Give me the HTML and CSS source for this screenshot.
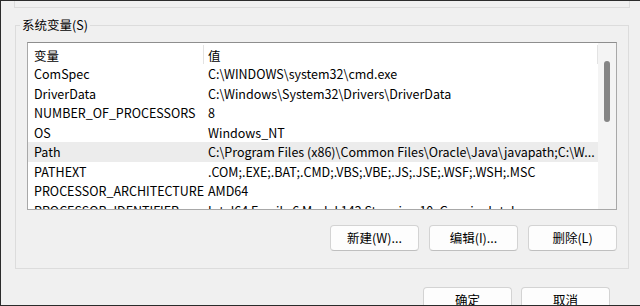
FILE: index.html
```html
<!DOCTYPE html>
<html lang="zh-CN">
<head>
<meta charset="utf-8">
<title>环境变量</title>
<link rel="stylesheet" href="styles.css">
</head>
<body>
<div class="window">
  <div class="prev-group"></div>
  <fieldset class="group">
    <legend class="group-title">系统变量(S)</legend>
    <div class="group-body">
      <div class="listbox">
        <div class="list-main">
          <div class="list-header">
            <div class="col-name hcell">变量</div>
            <div class="col-value hcell">值</div>
          </div>
          <div class="list-body">
            <div class="row"><div class="col-name">ComSpec</div><div class="col-value">C:\WINDOWS\system32\cmd.exe</div></div>
            <div class="row"><div class="col-name">DriverData</div><div class="col-value">C:\Windows\System32\Drivers\DriverData</div></div>
            <div class="row"><div class="col-name">NUMBER_OF_PROCESSORS</div><div class="col-value">8</div></div>
            <div class="row"><div class="col-name">OS</div><div class="col-value">Windows_NT</div></div>
            <div class="row selected"><div class="col-name">Path</div><div class="col-value">C:\Program Files (x86)\Common Files\Oracle\Java\javapath;C:\W...</div></div>
            <div class="row"><div class="col-name">PATHEXT</div><div class="col-value">.COM;.EXE;.BAT;.CMD;.VBS;.VBE;.JS;.JSE;.WSF;.WSH;.MSC</div></div>
            <div class="row"><div class="col-name">PROCESSOR_ARCHITECTURE</div><div class="col-value">AMD64</div></div>
            <div class="row"><div class="col-name">PROCESSOR_IDENTIFIER</div><div class="col-value">Intel64 Family 6 Model 142 Stepping 10, GenuineIntel</div></div>
          </div>
        </div>
        <div class="scrollbar"><div class="thumb"></div></div>
      </div>
      <div class="button-row">
        <button class="btn">新建(W)...</button>
        <button class="btn">编辑(I)...</button>
        <button class="btn">删除(L)</button>
      </div>
    </div>
  </fieldset>
  <div class="dialog-buttons">
    <button class="btn">确定</button>
    <button class="btn">取消</button>
  </div>
</div>
</body>
</html>
```

FILE: styles.css
```css
* { box-sizing: border-box; }
html, body { margin: 0; padding: 0; background: #f0f0f0; }
body {
  width: 640px;
  height: 306px;
  overflow: hidden;
  font-family: "Noto Sans CJK SC", "Noto Sans", sans-serif;
  font-size: 12.5px;
  color: #000;
}
.window {
  width: 640px;
  height: 306px;
  border-top: 1px solid #2b2b2b;
  border-left: 1px solid #2b2b2b;
  border-bottom: 1px solid #2b2b2b;
  overflow: hidden;
  display: flex;
  flex-direction: column;
}
.prev-group {
  flex: none;
  height: 7px;
  margin: 0 10px 0 13px;
  border: 1px solid #dcdcdc;
  border-top: none;
}
.group {
  flex: none;
  margin: 9px 11px 0 14px;
  padding: 0 0 17px 0;
  border: 1px solid #dcdcdc;
  min-width: 0;
}
.group-title {
  margin-left: 4px;
  padding: 0 2px;
  line-height: 16px;
  height: 16px;
}
.group-body {
  padding: 9px 11px 0 11px;
}
.listbox {
  height: 168px;
  border: 1px solid #a8a8a8;
  border-top-color: #8e8e8e;
  background: #fff;
  display: flex;
}
.list-main {
  flex: 1;
  min-width: 0;
  display: flex;
  flex-direction: column;
}
.list-header {
  flex: none;
  height: 21px;
  padding-top: 2px;
  display: flex;
}
.hcell {
  height: 19px;
  line-height: 19px;
  padding-top: 1px;
  border-right: 1px solid #e3e3e3;
}
.col-name {
  flex: none;
  width: 176px;
  padding-left: 6px;
  white-space: nowrap;
  overflow: hidden;
}
.col-value {
  flex: 1;
  min-width: 0;
  padding-left: 4px;
  white-space: nowrap;
  overflow: hidden;
}
.list-body {
  flex: 1;
  min-height: 0;
  overflow: hidden;
}
.row {
  display: flex;
  height: 19.5px;
  line-height: 19.5px;
}
.row.selected { background: #ececec; }
.scrollbar {
  flex: none;
  width: 18px;
  background: #f4f4f4;
  padding-top: 18px;
}
.thumb {
  width: 6px;
  height: 61px;
  margin: 0 auto;
  border-radius: 3px;
  background: #858585;
}
.button-row {
  display: flex;
  justify-content: flex-end;
  gap: 10px;
  margin-top: 15px;
}
.btn {
  flex: none;
  width: 89px;
  height: 26px;
  padding: 0;
  border: 1px solid #d3d3d3;
  border-bottom-color: #bfbfbf;
  border-radius: 4px;
  background: #fdfdfd;
  font: inherit;
  color: #000;
  line-height: 22px;
}
.dialog-buttons {
  flex: none;
  display: flex;
  justify-content: flex-end;
  gap: 9px;
  margin: 18px 30px 0 0;
}
```
